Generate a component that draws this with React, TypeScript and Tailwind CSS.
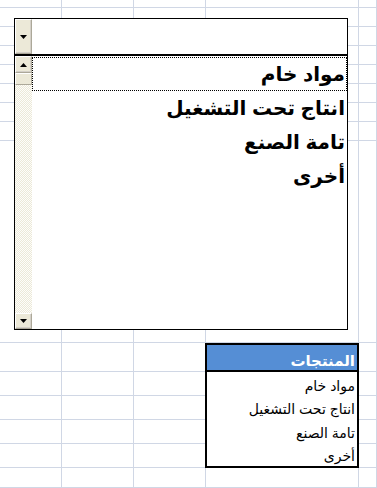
const upperRows = ["h-[8px]", "h-[19px]", "h-[19px]", "h-[19px]", "h-[19px]", "h-[19px]", "h-[19px]", "h-[19px]", "h-[202px]"];
const upperCols = ["w-[62px]", "w-[72px]", "w-[72px]", "w-[153px]", "w-[18px]"];
const lowerRows = ["h-[29px]", "h-[24px]", "h-[24px]", "h-[24px]", "h-[24px]", "h-[20px]"];

const items = ["مواد خام", "انتاج تحت التشغيل", "تامة الصنع", "أخرى"];

function Arrow({ up }: { up?: boolean }) {
  return (
    <svg width="7" height="4" viewBox="0 0 7 4" className="block">
      {up ? <path d="M3.5 0 L7 4 L0 4 Z" fill="#000" /> : <path d="M0 0 L7 0 L3.5 4 Z" fill="#000" />}
    </svg>
  );
}

function ScrollButton({ up, className }: { up?: boolean; className: string }) {
  return (
    <div
      className={`${className} w-[17px] shrink-0 flex items-center justify-center bg-[#ece9d8] border-t border-l border-t-white border-l-white border-b border-r border-b-[#aca899] border-r-[#aca899] shadow-[inset_-1px_-1px_0_#d4d0c8]`}
    >
      <Arrow up={up} />
    </div>
  );
}

function ListBox() {
  return (
    <div className="absolute left-[14px] top-[18px] w-[334px] h-[312px] flex flex-col bg-white">
      <div className="flex h-[36px] border-t border-x border-black">
        <ScrollButton className="h-[35px]" />
        <div className="flex-1" />
      </div>
      <div className="h-[2px] bg-black" />
      <div className="flex flex-1 min-h-0 border-x border-b border-black">
        <div className="w-[17px] flex flex-col">
          <ScrollButton up className="h-[17px]" />
          <div className="h-[12px] w-[17px] bg-[#ece9d8] border-t border-l border-t-white border-l-white border-b border-r border-b-[#aca899] border-r-[#aca899]" />
          <div className="flex-1 bg-[repeating-conic-gradient(#ece9d8_0%_25%,#fdfdfb_0%_50%)] bg-[length:2px_2px]" />
          <ScrollButton className="h-[16px]" />
        </div>
        <div className="flex-1 flex flex-col pt-[1px]">
          {items.map((t, i) => (
            <div
              key={t}
              dir="rtl"
              className={`h-[34px] flex items-center pr-[1px] text-[20px] font-bold leading-none text-black ${
                i === 0 ? "border border-dotted border-black" : "border border-transparent"
              }`}
            >
              {t}
            </div>
          ))}
        </div>
      </div>
    </div>
  );
}

function ProductsTable() {
  return (
    <div className="w-[154px] flex flex-col">
      <div className="h-[125px] border-2 border-black flex flex-col bg-white">
        <div dir="rtl" className="h-[27px] bg-[#558ed5] border-b-2 border-black flex items-end pb-[2px] pr-[2px] text-[15px] font-bold text-white leading-none">
          المنتجات
        </div>
        <div className="flex-1 flex flex-col">
          {items.map((t) => (
            <div key={t} dir="rtl" className="flex-1 flex items-end pb-[3px] pr-[2px] text-[14px] leading-none text-black">
              {t}
            </div>
          ))}
        </div>
      </div>
      <div className="h-[20px] border-x border-b border-[#d0d7e5]" />
    </div>
  );
}

export default function App() {
  return (
    <div className="relative w-[377px] h-[488px] overflow-hidden bg-white font-['Arial','Liberation_Sans','DejaVu_Sans',sans-serif]">
      <div className="flex flex-col">
        {upperRows.map((h, r) => (
          <div key={r} className={`flex ${h}`}>
            {upperCols.map((w, c) => (
              <div key={c} className={`${w} h-full border-r border-b border-[#d0d7e5]`} />
            ))}
          </div>
        ))}
      </div>
      <div className="flex">
        <div className="w-[205px] flex flex-col">
          {lowerRows.map((h, r) => (
            <div key={r} className={`flex ${h}`}>
              <div className="w-[62px] h-full border-r border-b border-[#d0d7e5]" />
              <div className="w-[72px] h-full border-r border-b border-[#d0d7e5]" />
              <div className="w-[71px] h-full border-b border-[#d0d7e5]" />
            </div>
          ))}
        </div>
        <ProductsTable />
        <div className="w-[18px] flex flex-col">
          {lowerRows.map((h, r) => (
            <div key={r} className={`${h} border-r border-b border-[#d0d7e5]`} />
          ))}
        </div>
      </div>
      <ListBox />
    </div>
  );
}
